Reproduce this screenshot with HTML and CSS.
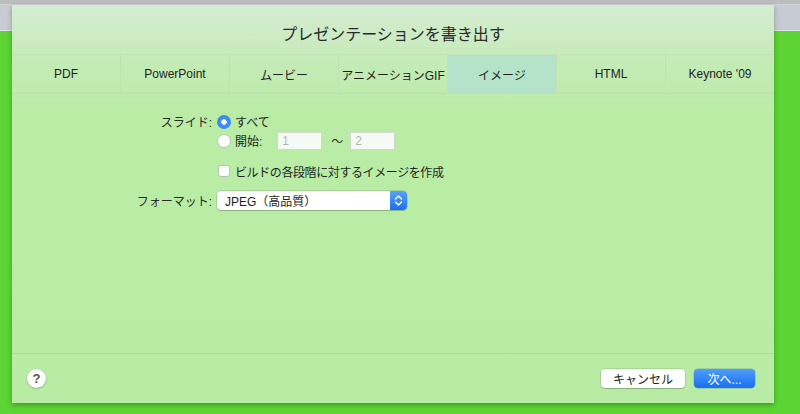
FILE: index.html
```html
<!DOCTYPE html>
<html>
<head>
    <meta charset="utf-8">
    <title>プレゼンテーションを書き出す</title>
    <link rel="stylesheet" href="styles.css">
</head>
<body>
<div class="dialog">
    <div class="title">プレゼンテーションを書き出す</div>

    <div class="tabs">
        <div class="tab">PDF</div>
        <div class="tab">PowerPoint</div>
        <div class="tab">ムービー</div>
        <div class="tab">アニメーションGIF</div>
        <div class="tab selected">イメージ</div>
        <div class="tab">HTML</div>
        <div class="tab">Keynote '09</div>
    </div>

    <div class="form">
        <div class="row row1">
            <div class="label">スライド:</div>
            <div class="control">
                <span class="radio on"></span>
                <span class="text">すべて</span>
            </div>
        </div>
        <div class="row row2">
            <div class="label"></div>
            <div class="control">
                <span class="radio"></span>
                <span class="text">開始:</span>
                <span class="field first">1</span>
                <span class="tilde">〜</span>
                <span class="field">2</span>
            </div>
        </div>
        <div class="row row3">
            <div class="label"></div>
            <div class="control">
                <span class="checkbox"></span>
                <span class="text tight">ビルドの各段階に対するイメージを作成</span>
            </div>
        </div>
        <div class="row row4">
            <div class="label">フォーマット:</div>
            <div class="control">
                <div class="popup">
                    <span class="popup-text">JPEG（高品質）</span>
                    <span class="stepper">
                        <svg width="9" height="13" viewBox="0 0 9 13">
                            <path d="M1.5 5 L4.5 2 L7.5 5" fill="none" stroke="#fff" stroke-width="1.4" stroke-linecap="round" stroke-linejoin="round"/>
                            <path d="M1.5 8 L4.5 11 L7.5 8" fill="none" stroke="#fff" stroke-width="1.4" stroke-linecap="round" stroke-linejoin="round"/>
                        </svg>
                    </span>
                </div>
            </div>
        </div>
    </div>

    <div class="footer">
        <div class="help">?</div>
        <div class="buttons">
            <button class="btn cancel">キャンセル</button>
            <button class="btn next">次へ...</button>
        </div>
    </div>
</div>
</body>
</html>
```

FILE: styles.css
```css
body {
    margin: 0;
    width: 800px;
    height: 414px;
    overflow: hidden;
    font-family: "Liberation Sans", "Noto Sans CJK JP", sans-serif;
    color: #222;
    background: linear-gradient(to bottom,
        #bdbdbd 0, #bdbdbd 4px,
        #d2d2d2 4px, #d2d2d2 5px,
        #c7cbd3 5px, #c7cbd3 30px,
        #dfe3e8 30px, #dfe3e8 31px,
        #5cd434 31px);
}

.dialog {
    margin-left: 12px;
    margin-top: 5px;
    width: 762px;
    height: 398px;
    display: flex;
    flex-direction: column;
    background: linear-gradient(to bottom, #d5ecd2 0, #c4ebb6 60px, #baeca6 110px, #b8eca4 100%);
    box-shadow: 0 2px 5px rgba(0, 0, 0, 0.28);
}

.title {
    height: 49px;
    display: flex;
    align-items: center;
    justify-content: center;
    padding-top: 7px;
    box-sizing: border-box;
    font-size: 16px;
    color: #2a2a2a;
}

.tabs {
    display: flex;
    height: 40px;
    border-top: 1px solid #c3e2b6;
    border-bottom: 1px solid #bfe1b0;
    box-sizing: border-box;
}

.tab {
    flex: 1;
    display: flex;
    align-items: center;
    justify-content: center;
    font-size: 12px;
    color: #1e1e1e;
    border-left: 1px solid #c0e2b3;
}

.tab:first-child {
    border-left: none;
}

.tab.selected {
    background-color: #b5e3c9;
}

.form {
    padding-top: 18px;
    font-size: 12px;
    flex: 1;
}

.row {
    display: flex;
    align-items: center;
}

.row1,
.row2 {
    height: 19px;
}

.row3 {
    height: 16px;
    margin-top: 13px;
}

.row4 {
    height: 19px;
    margin-top: 12px;
}

.label {
    width: 200px;
    text-align: right;
    color: #2a2a2a;
}

.control {
    margin-left: 5px;
    display: flex;
    align-items: center;
}

.radio {
    width: 14px;
    height: 14px;
    border-radius: 50%;
    box-sizing: border-box;
    background-color: #fff;
    border: 1px solid #b9c2b6;
    margin-right: 4px;
}

.radio.on {
    border: none;
    background: radial-gradient(circle, #fff 0, #fff 2.5px, #3c8cf6 3px);
}

.text {
    color: #1e1e1e;
}

.text.tight {
    letter-spacing: -0.4px;
}

.field {
    width: 45px;
    height: 18px;
    box-sizing: border-box;
    background-color: #f6faf4;
    border: 1px solid #cfd8cb;
    color: #b4b4b4;
    padding-left: 4px;
    line-height: 16px;
}

.field.first {
    margin-left: 15px;
}

.tilde {
    margin: 0 7px 0 9px;
    color: #333;
}

.checkbox {
    width: 12px;
    height: 12px;
    box-sizing: border-box;
    background-color: #fff;
    border: 1px solid #b9c2b6;
    border-radius: 3px;
    margin-left: 1px;
    margin-right: 5px;
}

.popup {
    width: 190px;
    height: 19px;
    display: flex;
    align-items: center;
    justify-content: space-between;
    background-color: #fff;
    border-radius: 4px;
    box-shadow: 0 0 0 0.5px rgba(0, 0, 0, 0.2), 0 1px 1px rgba(0, 0, 0, 0.15);
    overflow: hidden;
}

.popup-text {
    padding-left: 8px;
    font-size: 12px;
    color: #1e1e1e;
}

.stepper {
    width: 17px;
    height: 19px;
    display: flex;
    align-items: center;
    justify-content: center;
    background: linear-gradient(to bottom, #5aa3fa, #1d6ff0);
}

.footer {
    height: 49px;
    border-top: 1px solid #aedd9b;
    display: flex;
    align-items: center;
    justify-content: space-between;
    padding: 0 19px 0 15px;
}

.help {
    width: 19px;
    height: 19px;
    border-radius: 50%;
    background-color: #fff;
    box-shadow: 0 0.5px 1.5px rgba(0, 0, 0, 0.35);
    display: flex;
    align-items: center;
    justify-content: center;
    font-size: 13px;
    font-weight: bold;
    color: #555;
}

.buttons {
    display: flex;
    gap: 9px;
}

.btn {
    font-family: "Liberation Sans", "Noto Sans CJK JP", sans-serif;
    font-size: 12px;
    height: 19px;
    padding: 0;
    border: none;
    border-radius: 4px;
    display: flex;
    align-items: center;
    justify-content: center;
}

.cancel {
    width: 84px;
    background-color: #fff;
    color: #222;
    box-shadow: 0 0 0 0.5px rgba(0, 0, 0, 0.18), 0 1px 1px rgba(0, 0, 0, 0.18);
}

.next {
    width: 61px;
    color: #fff;
    background: linear-gradient(to bottom, #4f9cf9, #1b6ff1);
    box-shadow: 0 0 0 0.5px rgba(0, 60, 160, 0.3);
}
```
